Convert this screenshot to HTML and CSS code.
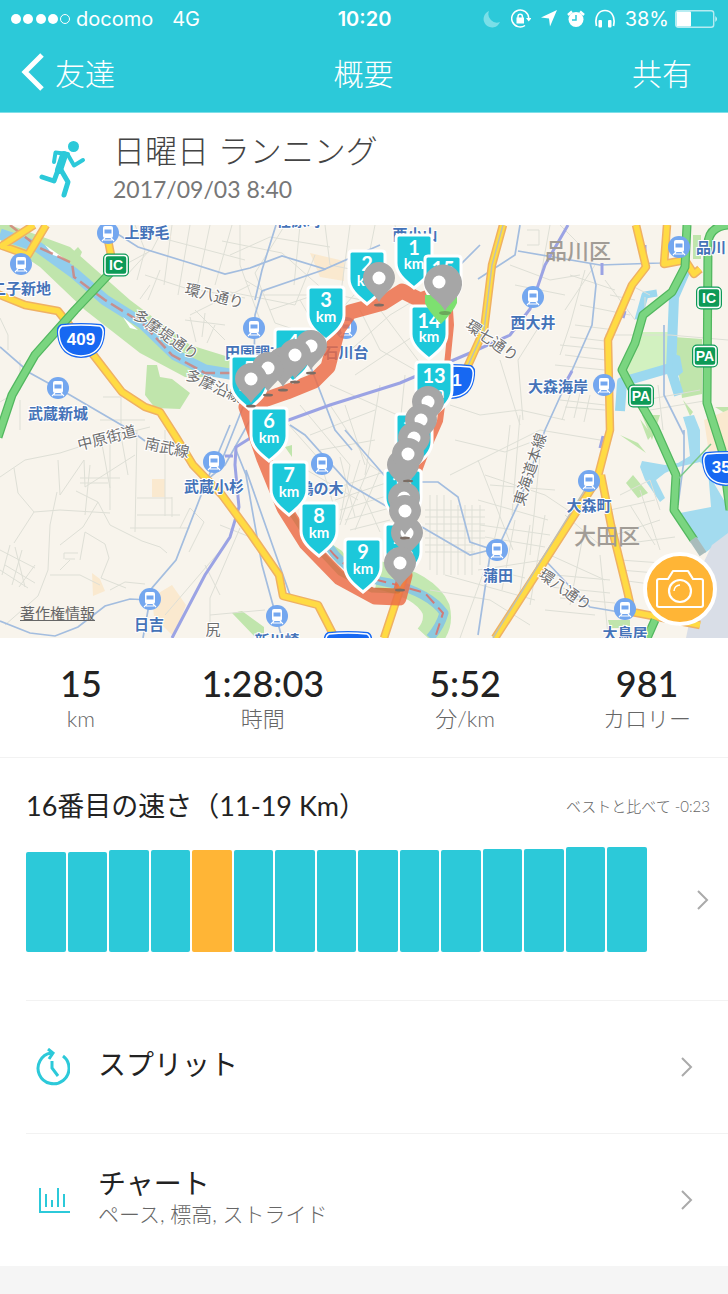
FILE: index.html
```html
<!DOCTYPE html>
<html lang="ja">

<head>
    <meta charset="UTF-8">
    <meta name="viewport" content="width=device-width, initial-scale=1.0">
    <title>概要</title>
    <link rel="stylesheet" href="styles.css">
</head>

<body>
    <header class="top">
        <div class="status">
            <div class="status-left">
                <svg width="59" height="12" viewBox="0 0 59 12" fill="#fff">
                    <circle cx="5" cy="6" r="5"/><circle cx="17" cy="6" r="5"/><circle cx="30" cy="6" r="5"/><circle cx="42" cy="6" r="5"/>
                    <circle cx="54" cy="6" r="4.500" fill="none" stroke="#fff" stroke-width="1"/>
                </svg>
                <span class="carrier">docomo</span>
                <span>4G</span>
            </div>
            <div class="status-time">10:20</div>
            <div class="status-right">
                <svg width="18" height="18" viewBox="0 0 18 18"><path d="M6 1A8.500 8.500 0 1 0 17 12A8.500 8.500 0 0 1 6 1z" fill="#7adfe8"/></svg>
                <svg width="20" height="20" viewBox="0 0 20 20" fill="none" stroke="#fff" stroke-width="1.500">
                    <path d="M14 16.500A8.500 8.500 0 1 1 17.700 9"/>
                    <path d="M15 9h5.500l-2.800 3.500z" fill="#fff" stroke="none"/>
                    <rect x="5.500" y="8.500" width="7.500" height="6" fill="#fff" stroke="none"/>
                    <path d="M7 9V7.500a2.200 2.200 0 0 1 4.400 0V9"/>
                </svg>
                <svg width="16" height="17" viewBox="0 0 16 17"><path d="M16 0L9 16.500L8 8.500L0 7.500z" fill="#fff"/></svg>
                <svg width="18" height="18" viewBox="0 0 18 18">
                    <circle cx="9" cy="9.500" r="7.500" fill="#fff"/>
                    <path d="M1 5L5 1.500M17 5L13 1.500" stroke="#fff" stroke-width="2.500"/>
                    <path d="M9 5v5H5" fill="none" stroke="#2cc9d9" stroke-width="1.500"/>
                </svg>
                <svg width="20" height="19" viewBox="0 0 20 19">
                    <path d="M1.500 17C-1 6 5 1.500 10 1.500S21 6 18.500 17" fill="none" stroke="#fff" stroke-width="1.700"/>
                    <rect x="3.500" y="11" width="3.500" height="7.500" rx="1" fill="#fff"/><rect x="13" y="11" width="3.500" height="7.500" rx="1" fill="#fff"/>
                </svg>
                <span>38%</span>
                <svg class="battery" width="43" height="18" viewBox="0 0 43 18">
                    <rect x=".7" y=".7" width="38" height="16.500" rx="2.500" fill="none" stroke="#b6ebf1" stroke-width="1.400"/>
                    <rect x="1.500" y="1.500" width="14.500" height="15" rx="1" fill="#fff"/>
                    <path d="M40.500 6q2.500 3 0 6z" fill="#fff"/>
                </svg>
            </div>
        </div>
        <nav class="nav">
            <button type="button" class="nav-button back">
                <svg width="24" height="38" viewBox="0 0 24 38"><path d="M21 2L4 19L21 36" fill="none" stroke="#fff" stroke-width="5"/></svg>友達
            </button>
            <h1>概要</h1>
            <button type="button" class="nav-button share">共有</button>
        </nav>
    </header>

    <section class="activity">
        <svg width="48" height="60" viewBox="0 0 48 60" fill="none" stroke="#2cc9d9" stroke-width="5" stroke-linecap="round" stroke-linejoin="round">
            <circle cx="34.500" cy="7.500" r="5.500" fill="#2cc9d9" stroke="none"/>
            <path d="M15 23L16.500 13.500L29 15" stroke-width="4"/>
            <path d="M25 16L20 31" stroke-width="8"/>
            <path d="M29 16L35 26.500L44 21" stroke-width="4"/>
            <path d="M19 31L15 42L3 38"/>
            <path d="M22 31L29 43L25 56"/>
        </svg>
        <div>
            <h2>日曜日 ランニング</h2>
            <p>2017/09/03 8:40</p>
        </div>
    </section>

    <div class="map">
        <svg class="map-canvas" viewBox="0 0 728 413">
            <defs>
                <g id="station">
                    <circle r="11" fill="#74a7ef"/>
                    <rect x="-5" y="-7" width="10" height="12" rx="2" fill="#fff"/>
                    <path d="M-3.500-3.500h7v4h-7z" fill="#74a7ef"/>
                    <path d="M-3 5l-3 3M3 5l3 3M-4 7h8" stroke="#fff" stroke-width="1.200"/>
                </g>
                <g id="flag"><path d="M-15 0h30q3 0 3 3v25c0 10-8 17-18 25c-10-8-18-15-18-25v-25q0-3 3-3z" fill="#1cc8da" stroke="#fff" stroke-width="3"/></g>
                <g id="pin">
                    <ellipse cx="0" cy="27" rx="5" ry="1.500" fill="#7b6d64"/>
                    <path d="M0 24C-4 16-16 10-16 0A16 16 0 0 1 16 0C16 10 4 16 0 24z" fill="#a6a6a6"/>
                </g>
                <g id="dotpin"><use href="#pin"/><circle r="6.500" fill="#fff"/></g>
                <g id="route">
                    <path d="M-20-16Q0-18 20-16Q25-14 24-6Q22 17 0 18Q-22 17-24-6Q-25-14-20-16z" fill="#1768f2"/>
                    <path d="M-19-14Q0-16 19-14Q23-12 22-5Q20 15 0 16Q-20 15-22-5Q-23-12-19-14z" fill="none" stroke="#fff" stroke-width="1.500"/>
                </g>
                <g id="box"><rect x="-13" y="-11.500" width="26" height="23" rx="5" fill="#0d9a57"/><rect x="-11" y="-9.500" width="22" height="19" rx="3" fill="none" stroke="#fff" stroke-width="1.500"/></g>
                <path id="west-roads" d="M-5 68L25 80L58 86L95 132L122 167L145 182L160 187L176 212L193 240L222 270L250 308L279 350L283 371L318 380L335 413M0 22L34 0M0 20L28 30L46 0M108 15l6 30"/>
                <path id="east-roads" d="M503 0L492 40L484 105L466 145M636 0L646 42L632 60L608 115L610 205L597 255L495 413M601 250L611 300L627 365L632 387L700 400M667 0L664 39L685 35L694 49L700 44M408 340L384 413"/>
                <path id="expressways" d="M110 48L75 85L35 130L12 170L-2 212M687 0L685 42L672 67L643 90L635 118L622 145L631 162L655 203L676 250L674 285L694 315M728 0Q708 2 708 20L707 178L722 225L730 285M655 395l-8 18"/>
            </defs>
            <rect width="728" height="413" fill="#f8f4ec"/>

            <!-- parks, water, airport -->
            <g fill="#c0e5ac">
                <path d="M10 0L70 22L130 75L190 120L232 133L240 152L185 152L140 128L85 85L40 42L0 15V0z"/>
                <path d="M70 30l8-8l4 5l-5 12zM147 140h10l3 12l12 2l18 14l-10 16l-25-1l-10-13z"/>
                <path d="M285 222l7-2v12zM330 318l12 8l22 30l-12-4z"/>
                <path d="M232 388l10-2l22 16v11h-8zM642 190h18l-8 25zM620 210l18 8l8 10zM633 250l15 18l-10 5l-12-15z"/>
                <path d="M608 395h22v8h-20zM674 112l28 2v55l-20 4zM683 175l10 12l-3 4zM640 194l12 16l-4 5zM715 182h13v8zM693 10h8v24h-8z"/>
            </g>
            <path d="M635 107h38l-3 37l-48 8z" fill="#d2f1c0"/>
            <path d="M378 350Q425 360 436 384Q440 400 428 413" fill="none" stroke="#c3e8b1" stroke-width="28"/>
            <path d="M310 28l34 8v20l-24-4zM92 348l8 6l5 12l-12 5zM152 372l20-12l14 20l-12 32l-20-20zM152 254h13v18h-13zM704 195l24-10v85l-18-35z" fill="#fae9cf"/>
            <path d="M0 9L38 22L74 48L105 75L142 98L175 130L205 145L236 150" fill="none" stroke="#91cdec" stroke-width="11"/>
            <g fill="none" stroke="#9bd8ef" stroke-width="10" stroke-linejoin="round">
                <path d="M688 40L674 72L671 145L679 170M670 143L622 157L620 186"/>
                <path d="M657 68L645 70L638 95" stroke-width="7"/>
                <path d="M330 323Q350 352 390 358Q430 368 444 388Q440 402 430 413" stroke="#8cc9df" stroke-width="9"/>
            </g>
            <path d="M683 192L694 190L700 205L700 228L712 255L728 282V312L718 318L705 328L695 318L678 295L680 288L711 282L708 245L700 237L678 242L665 248L656 255L665 273L660 277L645 255L640 242L642 236L665 240L678 238L690 231L687 205z" fill="#a3dbef"/>
            <path d="M672 128l8 3l3 16l-10 8z" fill="#9bd8ef"/>
            <path d="M728 308L712 320L700 345L686 413H728z" fill="#d9dee7"/>
            <path d="M45 20l20 14l-12-4zM123 92l15 13l-8-2z" fill="#fff"/>
            <path d="M10 0L38 22L72 38L74 52L105 75L142 98L172 130L205 148L238 148" fill="none" stroke="#d37f75" stroke-width="2.500" stroke-dasharray="14 5" opacity=".8"/>
            <path d="M330 325Q350 350 390 358L425 368L443 388L435 413" fill="none" stroke="#d07b78" stroke-width="2" stroke-dasharray="12 6"/>

            <!-- minor streets -->
            <g fill="none" stroke="#dedfd6" stroke-width="1">
                <path d="M0 252L25 235L60 228L110 212L150 202M14 243L18 268L34 287L60 285L110 288M34 287L14 318M57 267L50 300L48 345L38 371L5 400M76 266L98 277L110 300L142 316L160 322L167 328M98 277L83 302L60 320M58 235L60 270L84 235L85 262L135 230"/>
                <path d="M80 253h40M80 258h28M90 240l-5 50M110 205v80M100 208l10 55M120 205l8 45M137 205l-2 102M165 205v86M172 272v20M137 273h35M137 290h43M130 303h60M180 303l10-20l14 14l-15 30"/>
                <path d="M0 325l35 18M10 320l-8 30M15 322l10 40M22 325l-10 35M5 340l30 18M0 345l28 18M35 340l-16 22M80 335l5-28l20 12l4 14l-8 20l25 10M64 328h14M65 334h10M64 328v6M50 350h30l20 10M60 345l10-10M110 365l15-8l20 2"/>
                <path d="M240 303l-30 70v40M225 320l-60 70M210 390l55-5M205 340l15 30M220 300l30 12M0 93l8 17v15M20 135v30l-20 12M20 175v30M30 185h25M103 172h18v33M100 195h45"/>
                <path d="M115 45L152 25L165 0M125 52l25-27M135 0l10 25l-8 30M150 10l95 25M172 0l-8 60M190 0l-12 70M210 0l-15 72M232 0l-17 60M145 50l40 13l60 10M150 60l-10 14M160 45l-12 30M195 85l30 30M185 95l40 5M190 92l6 25M205 88l-3 24M215 100l-8 18M250 60l-60 30"/>
                <path d="M222 16l60 12l45 40l50 10M240 0v40l20 55M285 0l-30 48l20 50l45 15M300 0l-6 60M315 30l-20 50l-75-15M325 0l5 40l60 12M350 0l-10 75M375 0l-12 60l-45 50M395 0l6 30M230 30l40-18l60 10M260 70h50M270 85l45-15M300 75l20 35M245 55l20 12"/>
                <path d="M360 85l20 40l35 20M375 78l45 60M345 130l45-40l20-12M355 150l60-40M330 160l90 40M345 180l20 60M380 160l-15 90M405 150l-10 100M330 180l40 60l30 20M280 190l40 45l15 50M300 180l50 60M310 210l65-25M320 225l55-10"/>
                <path d="M298 240l60 35M340 232l15 60M350 240l-10 55M360 235l-20 65M370 240l-25 60M380 245l-25 60M330 265l60-20M335 275l60-20M340 285l50-15M345 295l45-12M350 305l40-10M360 262l20 45"/>
                <path d="M425 285h60M425 292h60M425 299h60M425 306h60M425 313h60M425 320h50M425 327h50M430 270v75M437 270v80M444 270v80M451 275v75M458 280v70M465 280v70M472 280v70M480 280v60M430 365l60 10l40 25M445 350l90 25M460 413l25-70l40 10"/>
                <path d="M450 180l30 10l40-5l45 10M455 215l50 12l40-15M450 250l40-20l50-25l60 10M485 250l60 20l30 20M478 235l35 90M490 260l65 5M478 275l70 20M510 200l-10 90M520 190l-8 100M540 230l-10 100M480 300l70 10M485 312l60 10M500 290l-15 65M515 295l-13 70M530 300l-12 80M545 290l-15 90M478 345l65-10"/>
                <path d="M510 40l40 15l30-5M515 60l50 10M570 50l45 15M585 45l-15 55l-10 30M595 40l-30 45M605 55l30 40M610 70l25 5M580 80l50 10M575 100l40 5M560 120l50 5M565 130l40 5M570 112l35 4M555 140l50 5M500 135l20 65M540 100l-22 35l5 60M527 5h12v15h-12M550 0l-10 55M560 0l20 20M630 60l20 10M645 72v25M605 110h65l58 5"/>
                <path d="M560 175l45 5M565 182l40 3M570 170l-8 25M580 168l-6 25M590 170l-6 27M645 175l55-10M650 185l60-10M658 160l5 45M620 270l30-15l10 30M610 285l45-10M615 310l45-15M615 320l60-8M620 335l70 5M620 345l60 5M620 355l60 8M640 265l20 60M630 280l25 40M600 330l8 80M585 300l-15 80M555 350l55 5M550 362l60 6M560 373l55 5M545 385l50 5M550 330l55 25M565 290l35 30"/>
            </g>

            <!-- railways -->
            <g fill="none" stroke="#a3bddf" stroke-width="1.700">
                <path d="M116 8L138 22L190 38L225 49L250 43L282 31L325 44L380 20M326 44L262 66L255 90L253 190L225 240L203 258M276 0L262 45L255 75M0 122L30 148L70 170L130 205L145 216M243 182L220 240"/>
                <path d="M230 200L205 260L176 335L152 363L143 413M0 396L30 408L55 411L78 402L105 381L130 374L150 375M236 225L246 250L262 340L282 413M246 245L290 370M290 200l15 10l45 50L470 330L490 325M310 140L335 205L352 225M345 205l45 52h48l20 15l12 45l30 10M490 330L478 410"/>
                <path d="M478 54L515 30L520 0M518 26L600 40L660 38L685 33M590 38L596 60L592 100L570 150L545 205L520 275L497 325M545 335l30 32l15 15l100 17M480 20l-35 35M664 100v70l20 40M684 205v30l-6 45"/>
            </g>
            <g fill="none" stroke="#9ba3e4" stroke-width="3">
                <path d="M252 212L236 222L235 240L239 282L230 312L205 350L172 413M275 200L330 180L400 158L470 128L510 110L530 84L545 40L568 0"/>
                <path d="M225 231h8M602 38v12M645 20v14M625 86l-2 7M572 146l-5 9M603 211l-3 12"/>
            </g>

            <!-- main roads -->
            <g fill="none" stroke="#efb163" stroke-width="8.500" stroke-linejoin="round">
                <use href="#west-roads"/><use href="#east-roads"/>
            </g>
            <g fill="none" stroke="#ffdb43" stroke-width="5.500" stroke-linejoin="round">
                <use href="#west-roads"/><use href="#east-roads"/>
            </g>
            <path d="M503 0L492 40L484 105L466 145M591 255L493 413" fill="none" stroke="#bfc0b4" stroke-width="1.500"/>
            <use href="#expressways" fill="none" stroke="#52b75f" stroke-width="9" stroke-linejoin="round"/>
            <use href="#expressways" fill="none" stroke="#7ad580" stroke-width="6.500" stroke-linejoin="round"/>
            <path d="M678 254l33-35" stroke="#7cc98a" stroke-width="1.500"/>
            <path d="M693 314l10 15" stroke="#a9bcbb" stroke-width="8"/>

            <!-- place names -->
            <g class="place">
                <text x="147" y="13">上野毛</text><text x="21" y="69">二子新地</text><text x="58" y="194">武蔵新城</text>
                <text x="255" y="133">田園調布</text><text x="346" y="133">石川台</text><text x="214" y="267">武蔵小杉</text>
                <text x="321" y="269">鵜の木</text><text x="149" y="405">日吉</text><text x="277" y="421">新川崎</text>
                <text x="299" y="1">荏原町</text><text x="415" y="15">西小山</text><text x="533" y="103">西大井</text>
                <text x="711" y="28">品川</text><text x="558" y="167">大森海岸</text><text x="589" y="286">大森町</text>
                <text x="498" y="356">蒲田</text><text x="625" y="414">大鳥居</text>
            </g>
            <g class="ward"><text x="578" y="34">品川区</text><text x="607" y="319">大田区</text></g>
            <g class="street">
                <text transform="translate(213 76) rotate(14)">環八通り</text>
                <text transform="translate(163 114) rotate(35)">多摩堤通り</text>
                <text transform="translate(212 166) rotate(24)">多摩沿線</text>
                <text transform="translate(108 218) rotate(-14)">中原街道</text>
                <text transform="translate(166 228) rotate(12)">南武線</text>
                <text transform="translate(489 120) rotate(35)">環七通り</text>
                <text transform="translate(535 246) rotate(-72)">東海道本線</text>
                <text transform="translate(562 369) rotate(35)">環八通り</text>
                <text x="213" y="410">尻</text>
            </g>

            <use href="#station" x="108" y="8"/><use href="#station" x="21" y="39"/><use href="#station" x="58" y="163"/>
            <use href="#station" x="254" y="103"/><use href="#station" x="346" y="103"/><use href="#station" x="214" y="237"/>
            <use href="#station" x="322" y="239"/><use href="#station" x="150" y="374"/><use href="#station" x="277" y="391"/>
            <use href="#station" x="533" y="72"/><use href="#station" x="679" y="22"/><use href="#station" x="604" y="160"/>
            <use href="#station" x="589" y="256"/><use href="#station" x="497" y="325"/><use href="#station" x="625" y="384"/>

            <g class="road-sign">
                <use href="#route" x="81" y="115"/><text x="81" y="120">409</text>
                <use href="#route" x="726" y="243"/><text x="726" y="248">357</text>
                <use href="#route" x="451" y="156"/><text x="457" y="161">1</text>
                <use href="#route" x="348" y="423"/>
                <use href="#box" x="116" y="40"/><text x="116" y="45" class="small">IC</text>
                <use href="#box" x="709" y="73"/><text x="709" y="78" class="small">IC</text>
                <use href="#box" x="705" y="131"/><text x="705" y="136" class="small">PA</text>
                <use href="#box" x="641" y="171"/><text x="641" y="176" class="small">PA</text>
            </g>

            <!-- running track -->
            <g fill="none" stroke="#ec6b45" stroke-linejoin="round" stroke-linecap="round" opacity=".82">
                <path d="M440 68L420 75L402 66L383 78L350 87L338 104L328 142L314 156L287 167L264 175L249 190" stroke-width="15"/>
                <path d="M246 182L264 234L284 283L306 318L340 353L375 372L399 373L405 350" stroke-width="15"/>
                <path d="M288 283L308 314L340 348L372 365L398 366" stroke-width="5" stroke="#cf6234"/>
                <path d="M405 350L410 270L425 230L440 196L446 150L451 100L450 85" stroke-width="6"/>
            </g>

            <!-- kilometre flags -->
            <g class="km">
                <use href="#flag" x="367" y="26"/><text x="367" y="46">2</text><text x="367" y="61" class="unit">km</text>
                <use href="#flag" x="414" y="10"/><text x="414" y="30">1</text><text x="414" y="44" class="unit">km</text>
                <use href="#flag" x="293" y="104"/><text x="293" y="124">4</text><text x="293" y="139" class="unit">km</text>
                <use href="#flag" x="326" y="62"/><text x="326" y="82">3</text><text x="326" y="97" class="unit">km</text>
                <use href="#flag" x="249" y="131"/><text x="249" y="151">5</text><text x="249" y="166" class="unit">km</text>
                <use href="#flag" x="269" y="183"/><text x="269" y="203">6</text><text x="269" y="218" class="unit">km</text>
                <use href="#flag" x="289" y="237"/><text x="289" y="257">7</text><text x="289" y="272" class="unit">km</text>
                <use href="#flag" x="319" y="278"/><text x="319" y="298">8</text><text x="319" y="313" class="unit">km</text>
                <use href="#flag" x="363" y="314"/><text x="363" y="334">9</text><text x="363" y="349" class="unit">km</text>
                <use href="#flag" x="403" y="299"/><text x="403" y="319">10</text><text x="403" y="334" class="unit">km</text>
                <use href="#flag" x="403" y="245"/><text x="403" y="265">11</text><text x="403" y="280" class="unit">km</text>
                <use href="#flag" x="414" y="189"/><text x="414" y="209">12</text><text x="414" y="224" class="unit">km</text>
                <use href="#flag" x="434" y="137"/><text x="434" y="158">13</text><text x="434" y="173" class="unit">km</text>
                <use href="#flag" x="429" y="81"/><text x="429" y="103">14</text><text x="429" y="117" class="unit">km</text>
                <use href="#flag" x="443" y="31"/><text x="443" y="51">15</text><text x="443" y="66" class="unit">km</text>
            </g>

            <path d="M425 70h32v8Q454 86 441 99Q428 86 425 78z" fill="#7de070"/>
            <use href="#dotpin" x="379" y="53"/>
            <use href="#dotpin" x="311" y="121"/><use href="#pin" x="283" y="138"/><use href="#dotpin" x="268" y="143"/>
            <use href="#dotpin" x="295" y="130"/><use href="#dotpin" x="251" y="154"/>
            <ellipse cx="445" cy="88" rx="6" ry="2" fill="#6ba85a"/>
            <path d="M445 86C441 76 424 70 424 57A19 19 0 0 1 462 60C461 72 449 78 445 86z" fill="#a6a6a6"/><circle cx="439" cy="57" r="6.500" fill="#fff"/>
            <use href="#dotpin" x="428" y="177"/><use href="#dotpin" x="421" y="195"/><use href="#dotpin" x="414" y="213"/>
            <use href="#pin" x="403" y="240"/><use href="#dotpin" x="408" y="229"/>
            <use href="#dotpin" x="404" y="273"/><use href="#dotpin" x="407" y="308"/><use href="#dotpin" x="405" y="286"/>
            <use href="#dotpin" x="400" y="338"/>
        </svg>
        <a href="#" class="copyright">著作権情報</a>
        <button type="button" class="camera" aria-label="写真">
            <svg width="48" height="40" viewBox="0 0 48 40" fill="none" stroke="#fff" stroke-width="2.200" stroke-linejoin="round">
                <path d="M3 10h9l5-8h15l5 8h8q2 0 2 2v24q0 2-2 2H3q-2 0-2-2V12q0-2 2-2z"/>
                <circle cx="24" cy="22" r="11"/><path d="M18 22a6 6 0 0 1 6-6" stroke-width="1.500"/>
            </svg>
        </button>
    </div>

    <section class="stats">
        <div><strong>15</strong><span>km</span></div>
        <div><strong>1:28:03</strong><span>時間</span></div>
        <div><strong>5:52</strong><span>分/km</span></div>
        <div><strong>981</strong><span>カロリー</span></div>
    </section>

    <section class="pace">
        <div class="pace-head">
            <h3>16番目の速さ（11-19 Km）</h3>
            <p>ベストと比べて -0:23</p>
        </div>
        <div class="pace-body">
            <div class="bars">
                <i style="height:100px"></i><i style="height:100px"></i><i style="height:102px"></i><i style="height:102px"></i>
                <i class="current" style="height:102px"></i><i style="height:102px"></i><i style="height:102px"></i><i style="height:102px"></i>
                <i style="height:102px"></i><i style="height:102px"></i><i style="height:102px"></i><i style="height:103px"></i>
                <i style="height:103px"></i><i style="height:105px"></i><i style="height:105px"></i>
            </div>
            <svg class="chevron" width="14" height="22" viewBox="0 0 14 22"><path d="M2 2L11 11L2 20"/></svg>
        </div>
    </section>

    <a href="#" class="row">
        <svg class="row-icon" width="36" height="38" viewBox="0 0 36 38">
            <path d="M29 8A15.500 15.500 0 1 1 17 5M14 1L19 5L15 11M18 13V20L24 28"/>
        </svg>
        <span class="row-text"><span class="row-title">スプリット</span></span>
        <svg class="chevron" width="14" height="22" viewBox="0 0 14 22"><path d="M2 2L11 11L2 20"/></svg>
    </a>
    <a href="#" class="row">
        <svg class="row-icon" width="36" height="38" viewBox="0 0 36 38">
            <path d="M6 7V31H36M12 13V26M18 19V26M24 7V26M30 13V26" stroke-width="2"/>
        </svg>
        <span class="row-text"><span class="row-title">チャート</span><span class="row-sub">ペース, 標高, ストライド</span></span>
        <svg class="chevron" width="14" height="22" viewBox="0 0 14 22"><path d="M2 2L11 11L2 20"/></svg>
    </a>
</body>

</html>
```
FILE: styles.css
```css
* {
    box-sizing: border-box;
}

body {
    margin: 0;
    font-family: Lato, "Noto Sans CJK JP", sans-serif;
    background-color: #f5f5f5;
    color: #222;
}

h1,
h2,
h3,
p {
    margin: 0;
    font-weight: 300;
}

svg {
    flex: none;
    display: block;
}

a {
    color: inherit;
    text-decoration: none;
}

button {
    border: none;
    padding: 0;
    background: none;
    font-family: inherit;
    cursor: pointer;
}

/* Top bar */
.top {
    background-color: #2cc9d9;
    color: #fff;
    border-bottom: 1px solid #7fdfe8;
}

.status {
    display: grid;
    grid-template-columns: 1fr auto 1fr;
    align-items: center;
    height: 37px;
    padding: 0 10px 0 11px;
    font-family: Inter, sans-serif;
    font-size: 20px;
}

.status-left,
.status-right {
    display: flex;
    align-items: center;
}

.carrier {
    margin: 0 19px 0 6px;
}

.status-time {
    font-weight: 600;
}

.status-right {
    justify-content: flex-end;
    gap: 10px;
}

.battery {
    margin-left: -4px;
}

.nav {
    display: grid;
    grid-template-columns: 1fr auto 1fr;
    align-items: center;
    height: 75px;
    padding: 0 36px 5px 21px;
}

.nav h1 {
    font-size: 30px;
    margin-left: 14px;
}

.nav-button {
    display: flex;
    align-items: center;
    color: #fff;
    font-size: 30px;
    font-weight: 300;
}

.back {
    gap: 10px;
    justify-self: start;
}

.share {
    justify-self: end;
}

/* Activity title */
.activity {
    display: flex;
    align-items: center;
    gap: 26px;
    height: 112px;
    padding-left: 39px;
    background-color: #fff;
}

.activity h2 {
    font-size: 32px;
    line-height: 40px;
    color: #444;
}

.activity p {
    font-size: 23px;
    line-height: 37px;
    font-weight: 400;
    color: #777;
}

/* Map */
.map {
    position: relative;
}

.map-canvas {
    width: 100%;
    height: auto;
}

.map-canvas text {
    text-anchor: middle;
    font-family: "Noto Sans CJK JP", sans-serif;
}

.place text {
    font-size: 15px;
    font-weight: 700;
    fill: #4573b8;
    stroke: #fff;
    stroke-width: 2px;
    paint-order: stroke;
}

.ward text {
    font-size: 22px;
    font-weight: 500;
    fill: #a19c96;
}

.street text {
    font-size: 15px;
    fill: #6e6e6e;
    stroke: #fff;
    stroke-width: 2px;
    paint-order: stroke;
}

.road-sign text {
    font-family: "Liberation Sans", sans-serif;
    font-size: 17px;
    font-weight: 700;
    fill: #fff;
}

.road-sign .small {
    font-size: 14px;
}

.km text {
    font-family: Lato, sans-serif;
    font-size: 20px;
    font-weight: 700;
    fill: #fff;
}

.km .unit {
    font-size: 15px;
}

.copyright {
    position: absolute;
    left: 20px;
    bottom: 15px;
    font-size: 15px;
    line-height: 20px;
    color: #666;
    text-decoration: underline;
}

.camera {
    position: absolute;
    right: 11px;
    bottom: 12px;
    display: flex;
    align-items: center;
    justify-content: center;
    width: 74px;
    height: 74px;
    border: 4px solid #fff;
    border-radius: 50%;
    background-color: #ffb536;
}

/* Totals */
.stats {
    display: grid;
    grid-template-columns: 4fr 5fr 5fr 4fr;
    align-items: center;
    height: 120px;
    background-color: #fff;
    border-bottom: 1px solid #f2f2f2;
    text-align: center;
}

.stats strong,
.stats span {
    display: block;
}

.stats strong {
    font-size: 36px;
    line-height: 42px;
    font-weight: 500;
}

.stats span {
    font-size: 22px;
    line-height: 30px;
    font-weight: 300;
    color: #666;
}

/* Pace chart */
.pace {
    padding: 22px 18px 48px 26px;
    background-color: #fff;
}

.pace-head {
    display: flex;
    align-items: center;
    justify-content: space-between;
    height: 48px;
}

.pace h3 {
    font-size: 27px;
    font-weight: 400;
}

.pace p {
    padding-top: 3px;
    font-size: 15px;
    color: #666;
}

.pace-body {
    display: flex;
    align-items: center;
    justify-content: space-between;
    gap: 49px;
    padding-top: 19px;
}

.bars {
    flex: 1;
    display: flex;
    align-items: flex-end;
    gap: 2px;
}

.bars i {
    flex: 1;
    border-radius: 2px;
    background-color: #2cc9d9;
}

.bars .current {
    background-color: #ffb536;
}

.chevron {
    fill: none;
    stroke: #aaa;
    stroke-width: 2;
}

/* Detail rows */
.row {
    display: flex;
    align-items: center;
    gap: 28px;
    height: 133px;
    padding: 0 34px;
    background: linear-gradient(#f2f2f2, #f2f2f2) 26px 0 / 100% 1px no-repeat #fff;
}

.row-icon {
    fill: none;
    stroke: #2cc9d9;
    stroke-width: 3;
}

.row-text {
    flex: 1;
    display: flex;
    flex-direction: column;
    padding-bottom: 6px;
}

.row-title {
    font-size: 28px;
    line-height: 34px;
}

.row-sub {
    font-size: 21px;
    line-height: 28px;
    font-weight: 300;
    color: #666;
}
```
